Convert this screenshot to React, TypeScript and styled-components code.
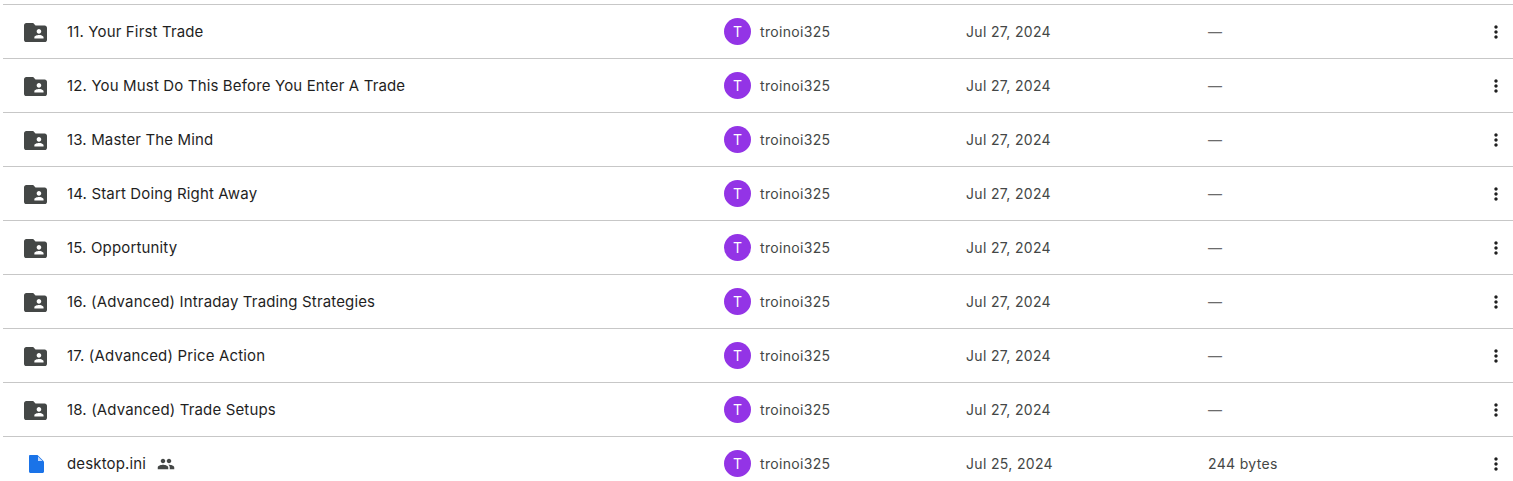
import styled, { createGlobalStyle } from "styled-components";

type FileRow = {
  name: string;
  date: string;
  size: string;
  kind: "folder" | "file";
  shared?: boolean;
};

const folderNames = [
  "11. Your First Trade",
  "12. You Must Do This Before You Enter A Trade",
  "13. Master The Mind",
  "14. Start Doing Right Away",
  "15. Opportunity",
  "16. (Advanced) Intraday Trading Strategies",
  "17. (Advanced) Price Action",
  "18. (Advanced) Trade Setups",
];

const rows: FileRow[] = [
  ...folderNames.map((name): FileRow => ({ name, date: "Jul 27, 2024", size: "—", kind: "folder" })),
  { name: "desktop.ini", date: "Jul 25, 2024", size: "244 bytes", kind: "file", shared: true },
];

const GlobalStyle = createGlobalStyle`
  html, body {
    margin: 0;
    background: #fff;
    overflow: hidden;
  }
  body {
    font-family: Inter, Roboto, "Liberation Sans", sans-serif;
  }
`;

const List = styled.div`
  padding: 4px 0 0 3px;
`;

const Row = styled.div`
  display: grid;
  grid-template-columns: 721px 242px 242px 1fr 27px;
  align-items: center;
  height: 53px;
  border-top: 1px solid #c7c7c7;
`;

const NameCell = styled.div`
  display: flex;
  align-items: center;
  padding-left: 21px;
`;

const IconSlot = styled.span`
  display: flex;
  align-items: center;
  width: 24px;
  height: 24px;
  padding-top: 1px;
  margin-right: 19px;
`;

const Name = styled.span`
  font-size: 15px;
  line-height: 20px;
  letter-spacing: 0.15px;
  color: #1f1f1f;
`;

const SharedIcon = styled.svg`
  width: 18px;
  height: 18px;
  margin-left: 11px;
  fill: #444746;
`;

const OwnerCell = styled.div`
  display: flex;
  align-items: center;
  gap: 9px;
`;

const Avatar = styled.span`
  display: flex;
  align-items: center;
  justify-content: center;
  width: 27px;
  height: 27px;
  border-radius: 50%;
  background: #9334e6;
  color: #fff;
  font-size: 14px;
  font-weight: 400;
`;

const MutedText = styled.span`
  font-size: 14px;
  line-height: 20px;
  letter-spacing: 0.33px;
  color: #444746;
`;

const SizeText = styled(MutedText)<{ $empty: boolean }>`
  color: ${(p) => (p.$empty ? "#6b6b6b" : "#444746")};
`;

const MoreIcon = styled.svg`
  width: 20px;
  height: 20px;
  fill: #1f1f1f;
  display: block;
`;

function FolderSharedIcon() {
  return (
    <svg width="23" height="19" viewBox="2 4 20 16" preserveAspectRatio="none" fill="#444746">
      <path d="M20 6h-8l-2-2H4c-1.1 0-2 .9-2 2v12c0 1.1.9 2 2 2h16c1.1 0 2-.9 2-2V8c0-1.1-.9-2-2-2zm-5 3c1.1 0 2 .9 2 2s-.9 2-2 2-2-.9-2-2 .9-2 2-2zm4 8h-8v-1c0-1.33 2.67-2 4-2s4 .67 4 2v1z" />
    </svg>
  );
}

function DocIcon() {
  return (
    <svg width="24" height="24" viewBox="0 0 24 24">
      <path
        fill="#1a73e8"
        d="M6 3h7.5L20 9.5v10c0 .85-.65 1.5-1.5 1.5h-12c-.85 0-1.5-.65-1.5-1.5v-15C5 3.65 5.15 3 6 3z"
      />
      <path fill="#c6dafc" d="M14 4.5 18.5 9H14z" />
    </svg>
  );
}

export default function App() {
  return (
    <>
      <GlobalStyle />
      <List>
        {rows.map((row) => (
          <Row key={row.name}>
            <NameCell>
              <IconSlot>{row.kind === "folder" ? <FolderSharedIcon /> : <DocIcon />}</IconSlot>
              <Name>{row.name}</Name>
              {row.shared && (
                <SharedIcon viewBox="0 0 24 24">
                  <path d="M16 11c1.66 0 2.99-1.34 2.99-3S17.66 5 16 5s-3 1.34-3 3 1.34 3 3 3zm-8 0c1.66 0 2.99-1.34 2.99-3S9.66 5 8 5 5 6.34 5 8s1.34 3 3 3zm0 2c-2.33 0-7 1.17-7 3.5V19h14v-2.5C15 14.17 10.33 13 8 13zm8 0c-.29 0-.62.02-.97.05 1.16.84 1.97 1.97 1.97 3.45V19h6v-2.5c0-2.33-4.67-3.5-7-3.5z" />
                </SharedIcon>
              )}
            </NameCell>
            <OwnerCell>
              <Avatar>T</Avatar>
              <MutedText>troinoi325</MutedText>
            </OwnerCell>
            <MutedText>{row.date}</MutedText>
            <SizeText $empty={row.size === "—"}>{row.size}</SizeText>
            <MoreIcon viewBox="0 0 24 24">
              <path d="M12 8c1.1 0 2-.9 2-2s-.9-2-2-2-2 .9-2 2 .9 2 2 2zm0 2c-1.1 0-2 .9-2 2s.9 2 2 2 2-.9 2-2-.9-2-2-2zm0 6c-1.1 0-2 .9-2 2s.9 2 2 2 2-.9 2-2-.9-2-2-2z" />
            </MoreIcon>
          </Row>
        ))}
      </List>
    </>
  );
}
